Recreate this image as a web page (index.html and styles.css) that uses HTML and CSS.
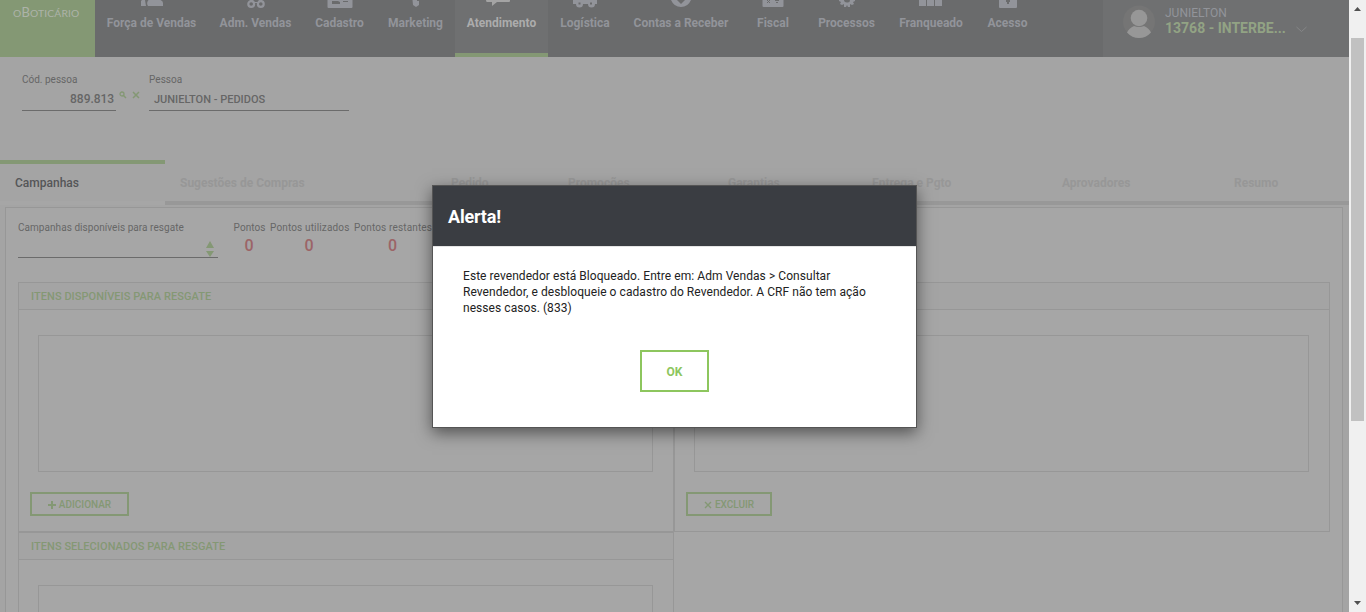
FILE: index.html
```html
<!DOCTYPE html>
<html lang="pt-BR">
<head>
<meta charset="utf-8">
<title>Atendimento</title>
<link rel="stylesheet" href="styles.css">
</head>
<body>
<div class="page">
  <header class="top">
    <div class="logo"><span class="logo-text"><small>O</small>B<small>OTICÁRIO</small></span></div>
    <nav class="nav">
      <a class="item"><svg class="ico" width="24" height="7"><path d="M2 0h3l1 6H1V1zM8.500 0h12q2.500 1 2.500 3v3H8Q6 3 8.500 0z"/></svg><span>Força de Vendas</span></a>
      <a class="item"><svg class="ico" width="20" height="9"><path d="M4 0h3l1 2h4l1-2h3v3H4z"/><g class="ring"><circle cx="5.200" cy="4" r="2.900"/><circle cx="14.800" cy="4" r="2.900"/></g></svg><span>Adm. Vendas</span></a>
      <a class="item"><svg class="ico" width="26" height="9"><path fill-rule="evenodd" d="M.5 0h25v7q0 1-1 1h-23q-1 0-1-1zM5 1v3h8V2l-2-1zM16 1v1h5V1z"/></svg><span>Cadastro</span></a>
      <a class="item"><svg class="ico" width="12" height="8"><path d="M2.500 0H7v1h2v4L6 7 3 5z"/></svg><span>Marketing</span></a>
      <a class="item active"><svg class="ico" width="34" height="8"><path d="M1 0h24v1q0 1-1 1H12L7 6V2H2Q1 2 1 0z"/></svg><span>Atendimento</span></a>
      <a class="item"><svg class="ico" width="26" height="8"><path fill-rule="evenodd" d="M1 0h24v4h-2a3.500 3.500 0 0 1-7 0h-5a3.500 3.500 0 0 1-7 0H1zM6.500 2.500v2h2v-2zM18 2.500v2h2v-2z"/></svg><span>Logística</span></a>
      <a class="item"><svg class="ico" width="22" height="8"><path fill-rule="evenodd" d="M1 0h20q-3 7-10 7T1 0zM7 0l4 4 4-4z"/></svg><span>Contas a Receber</span></a>
      <a class="item"><svg class="ico" width="22" height="8"><path d="M.5 0h21v6q0 1-1 1h-19q-1 0-1-1z"/><path class="cut" d="M5 3l3-3M5 0l3 3M13 .5h4M14 2.500h2"/></svg><span>Fiscal</span></a>
      <a class="item"><svg class="ico" width="16" height="8"><path fill-rule="evenodd" d="M0 0h16v1l-2 1 1 2-2 1-2-1v3H9L8 5 7 7H5V4L3 5 1 4l1-2-2-1zM5 0q0 2 3 2.500T11 0z"/></svg><span>Processos</span></a>
      <a class="item"><svg class="ico" width="24" height="7"><path d="M0 0h7v6H0zM8 0h7v6H8zM16 0h7v6h-7z"/></svg><span>Franqueado</span></a>
      <a class="item"><svg class="ico" width="18" height="9"><path fill-rule="evenodd" d="M0 0h18v7q0 1-1 1H1q-1 0-1-1zM7 0v2h1v2h2V2h1V0z"/></svg><span>Acesso</span></a>
    </nav>
    <div class="user">
      <svg class="avatar" width="32" height="33"><circle cx="16" cy="16.500" r="16" fill="#757575"/><circle cx="16" cy="13" r="8.300" fill="#979797"/><path d="M4 27.500Q6 23 11 21q5 2 10 0Q26 23 28 27.500q-5 5.500-12 5.500T4 27.500z" fill="#979797"/></svg>
      <div class="who"><span class="name">JUNIELTON</span><b class="org">13768 - INTERBE...</b></div>
      <svg class="chev" width="11" height="7"><path d="M.5 1l5 4.500 5-4.500" fill="none" stroke="#858688"/></svg>
    </div>
  </header>

  <section class="person">
    <div class="field code"><label>Cód. pessoa</label><div class="value">889.813</div></div>
    <div class="tools">
      <svg width="8" height="8"><circle cx="3" cy="3" r="2" fill="none" stroke="#849874" stroke-width="1.300"/><path d="M4.500 4.500L7 7" stroke="#849874" stroke-width="1.500"/></svg>
      <svg width="8" height="8"><path d="M1 1l6 6M7 1L1 7" stroke="#849874" stroke-width="1.500"/></svg>
    </div>
    <div class="field full"><label>Pessoa</label><div class="value">JUNIELTON - PEDIDOS</div></div>
  </section>

  <div class="tabs">
    <div class="tab on">Campanhas</div><div class="tab">Sugestões de Compras</div><div class="tab">Pedido</div><div class="tab">Promoções</div><div class="tab">Garantias</div><div class="tab">Entrega e Pgto</div><div class="tab">Aprovadores</div><div class="tab">Resumo</div>
  </div>

  <main class="panel">
    <div class="summary">
      <div class="select"><label>Campanhas disponíveis para resgate</label><div class="drop"><svg width="8" height="16"><path d="M0 7l4-7 4 7zM0 10h8l-4 6z" fill="#849874"/></svg></div></div>
      <div class="pts p1"><label>Pontos</label><b>0</b></div>
      <div class="pts p2"><label>Pontos utilizados</label><b>0</b></div>
      <div class="pts p3"><label>Pontos restantes</label><b>0</b></div>
    </div>
    <div class="boards">
      <section class="board"><h2>ITENS DISPONÍVEIS PARA RESGATE</h2><div class="list"></div><button class="act add"><svg width="8" height="8"><path d="M4 0v8M0 4h8" stroke="#849874" stroke-width="2"/></svg>ADICIONAR</button></section>
      <section class="board"><h2></h2><div class="list"></div><button class="act del"><svg width="8" height="8"><path d="M1 1l6 6M7 1L1 7" stroke="#849874" stroke-width="1.400"/></svg>EXCLUIR</button></section>
      <section class="board"><h2>ITENS SELECIONADOS PARA RESGATE</h2><div class="list"></div></section>
    </div>
  </main>
</div>
<aside class="scroll">
  <svg width="7" height="4"><path d="M0 4l3.500-4L7 4z" fill="#505050"/></svg>
  <div class="thumb"></div>
  <svg class="down" width="7" height="4"><path d="M0 0h7L3.500 4z" fill="#505050"/></svg>
</aside>
<div class="modal" role="dialog">
  <div class="modal-head">Alerta!</div>
  <div class="modal-body">
    <p>Este revendedor está Bloqueado. Entre em: Adm Vendas &gt; Consultar<br>Revendedor, e desbloqueie o cadastro do Revendedor. A CRF não tem ação<br>nesses casos. (833)</p>
    <button class="ok">OK</button>
  </div>
</div>
</body>
</html>
```
FILE: styles.css
```css
* { box-sizing: border-box; }
body { margin: 0; width: 1366px; height: 612px; overflow: hidden; display: flex; font-family: Roboto, sans-serif; background: #a4a4a4; }
.page { width: 1349px; height: 612px; overflow: hidden; display: flex; flex-direction: column; }
.page > * { flex-shrink: 0; }
.top { height: 57px; display: flex; background: #6a6b6c; }
.logo { width: 95px; background: #849874; padding: 5px 0 0 13px; }
.logo-text { display: block; font: 13px/15px Lato, sans-serif; color: #adb3a9; white-space: nowrap; letter-spacing: .15px; }
.logo-text small { font-size: 10.3px; }
.nav { width: 1008px; display: grid; grid-template-columns: 113px 95px 73px 79px 93px 74px 118px 66px 81px 88px 65px; }
.item { display: flex; flex-direction: column; align-items: center; font-size: 12px; line-height: 16px; font-weight: 700; color: #92949a; white-space: nowrap; }
.item span { margin-top: 6px; }
.ico { height: 9px; fill: #92949a; flex: none; }
.ring { fill: #6a6b6c; stroke: #92949a; stroke-width: 2.200; }
.cut { stroke: #6a6b6c; fill: none; }
.active { background: #6f7071; border-bottom: 4px solid #849874; color: #acacac; }
.active .ico { fill: #a4a4a4; }
.user { width: 246px; background: #6f7071; display: flex; padding: 5px 0 0 20px; }
.who { display: flex; flex-direction: column; margin-left: 10px; width: 122px; white-space: nowrap; }
.name { font-size: 12px; line-height: 16px; color: #92949a; }
.org { font-size: 14px; line-height: 15px; color: #92a384; }
.chev { margin: 21px 0 0 9px; }

.person { height: 103px; display: flex; padding: 15px 0 0 22px; }
label { display: block; font-size: 10px; line-height: 16px; color: #666; white-space: nowrap; letter-spacing: .05px; }
.value { height: 23px; border-bottom: 1px solid #6b6b6b; font-size: 12px; line-height: 23px; font-weight: 500; color: #666; }
.code { width: 94px; }
.code label { letter-spacing: 0; }
.code .value { text-align: right; padding-right: 2px; letter-spacing: -.05px; }
.tools { width: 33px; display: flex; gap: 5px; padding: 19px 0 0 3px; }
.full { width: 200px; }
.full .value { padding-left: 5px; font-size: 11px; line-height: 24px; }

.tabs { height: 45px; display: grid; grid-template-columns: 165px 271px 117px 160px 144px 190px 172px 130px; }
.tab { padding: 15px 0 0 15px; font-size: 12px; line-height: 16px; font-weight: 700; color: #979797; border-bottom: 4px solid #989898; white-space: nowrap; }
.tab.on { padding-top: 11px; border-top: 4px solid #849874; border-bottom-color: #a6a6a6; color: #555658; font-weight: 500; }

.panel { margin: 2px 6px 0 5px; height: 420px; border: 1px solid #979797; background: #a6a6a6; padding: 11px 12px 0; }
.summary { height: 63px; display: flex; }
.summary label { padding-top: 1px; line-height: 15px; }
.select { width: 200px; height: 39px; border-bottom: 1px solid #6b6b6b; }
.drop { display: flex; justify-content: flex-end; padding: 6px 4px 0 0; }
.pts { text-align: center; }
.pts b { display: block; margin-left: -1px; font-size: 16px; line-height: 22px; font-weight: 500; color: #9c6467; }
.p1 { width: 33px; margin-left: 15px; }
.p2 { width: 79px; margin-left: 4px; }
.p3 { width: 78px; margin-left: 5px; }
.p2 label, .p3 label { letter-spacing: .15px; }
.boards { display: grid; grid-template-columns: 656px 656px; grid-auto-rows: 250px; }
.board { border: 1px solid #979797; display: flex; flex-direction: column; align-items: flex-start; }
.board h2 { margin: 0; width: 100%; height: 27px; padding-left: 12px; border-bottom: 1px solid #979797; background: #a4a4a4; font-size: 11px; line-height: 27px; font-weight: 500; color: #849874; letter-spacing: .05px; }
.list { width: 615px; height: 137px; margin: 25px 0 0 19px; border: 1px solid #979797; }
.act { height: 24px; margin: 20px 0 0 11px; padding: 1px 0 0; border: 2px solid #849874; background: transparent; display: flex; align-items: center; justify-content: center; gap: 3px; font: 500 10px/20px Roboto, sans-serif; color: #849874; }
.add { width: 99px; }
.del { width: 86px; }

.scroll { width: 17px; height: 612px; background: #f0f0f0; display: flex; flex-direction: column; align-items: center; padding-top: 7px; }
.thumb { width: 13px; height: 383px; margin-top: 27px; background: #c1c1c1; }
.down { margin-top: auto; margin-bottom: 7px; }

.modal { position: absolute; left: 432px; top: 185px; width: 485px; height: 243px; border: 1px solid #555; background: #fff; box-shadow: 0 5px 15px rgba(0, 0, 0, .5); }
.modal-head { height: 61px; padding-left: 15px; background: #3a3d42; border-bottom: 1px solid #e5e5e5; font-size: 18px; line-height: 61px; font-weight: 700; color: #fff; letter-spacing: -.2px; }
.modal-body { padding: 21px 30px 0; display: flex; flex-direction: column; align-items: center; }
.modal-body p { margin: 0; align-self: stretch; font-size: 12px; line-height: 16px; color: #222; white-space: nowrap; letter-spacing: .06px; }
.ok { width: 69px; height: 42px; margin: 34px 0 0 0; padding: 2px 0 0; border: 2px solid #8dc65e; background: #fff; color: #8dc65e; font: 700 12px Roboto, sans-serif; }
```
